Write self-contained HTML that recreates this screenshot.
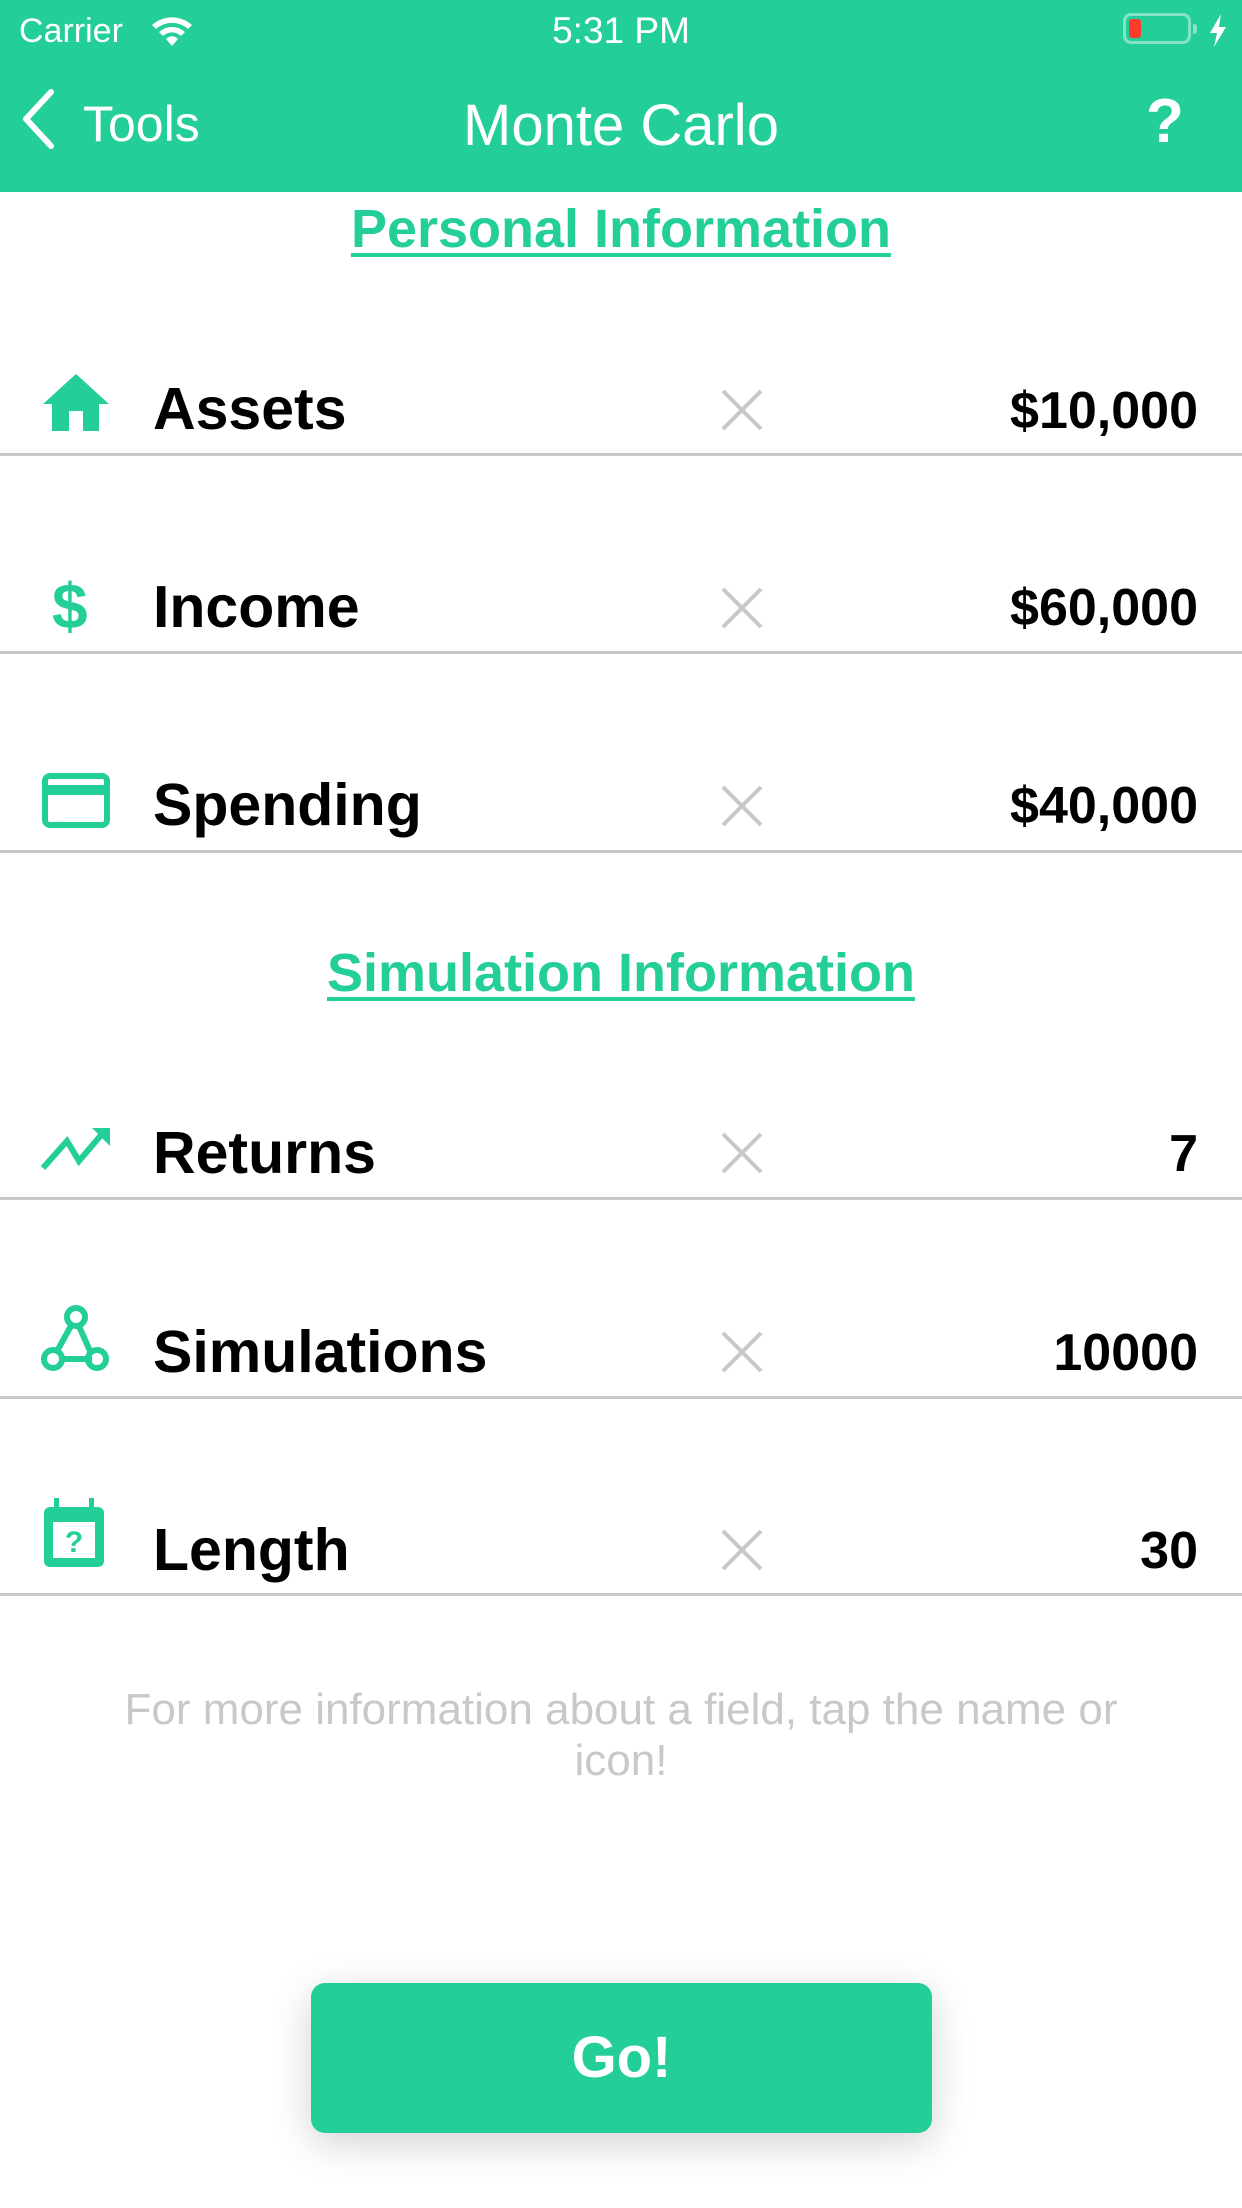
<!DOCTYPE html>
<html><head><meta charset="utf-8"><style>
*{margin:0;padding:0;box-sizing:border-box}
body{width:1242px;height:2208px;background:#fff;position:relative;overflow:hidden;font-family:"Liberation Sans",sans-serif}
.abs{position:absolute}
.hdr{left:0;top:0;width:1242px;height:192px;background:#23ce98}
.w{color:#fff}
.sec{left:0;width:1242px;text-align:center;color:#23ce98;font-weight:bold;font-size:54px;text-decoration:underline;text-decoration-thickness:4px;text-underline-offset:6px}
.lbl{left:153px;font-weight:bold;font-size:59px;color:#000;line-height:70px}
.val{right:44px;font-weight:bold;font-size:52px;color:#000;line-height:60px;text-align:right}
.sep{left:0;width:1242px;height:3px;background:#c8c7cc}
.x{left:721px;width:42px;height:42px}
.ic{left:42px}
</style></head><body>
<div class="abs hdr"></div>
<div class="abs w" style="left:19px;top:12px;font-size:34px">Carrier</div>
<svg class="abs" style="left:150px;top:14px" width="44" height="34" viewBox="0 0 44 34"><path d="M2 11 A30 30 0 0 1 42 11 L38 15 A24 24 0 0 0 6 15Z M9 18 A19 19 0 0 1 35 18 L31 22 A13 13 0 0 0 13 22Z M16 25 A8 8 0 0 1 28 25 L22 32Z" fill="#fff"/></svg>
<div class="abs w" style="left:0;width:1242px;text-align:center;top:10px;font-size:37px">5:31 PM</div>
<div class="abs" style="left:1123px;top:13px;width:68px;height:31px;border:3px solid rgba(255,255,255,.45);border-radius:8px"></div>
<div class="abs" style="left:1129px;top:19px;width:12px;height:19px;background:#ff3b30;border-radius:3px"></div>
<div class="abs" style="left:1193px;top:24px;width:4px;height:10px;background:rgba(255,255,255,.45);border-radius:0 3px 3px 0"></div>
<svg class="abs" style="left:1208px;top:14px" width="20" height="33" viewBox="0 0 20 33"><path d="M13 0 L2 19 L9 19 L6 33 L18 13 L11 13Z" fill="#fff"/></svg>
<svg class="abs" style="left:18px;top:88px" width="40" height="62" viewBox="0 0 40 62"><path d="M33 4 L8 31 L33 58" stroke="#fff" stroke-width="6" fill="none" stroke-linecap="round" stroke-linejoin="round"/></svg>
<div class="abs w" style="left:83px;top:95px;font-size:50px">Tools</div>
<div class="abs w" style="left:0;width:1242px;text-align:center;top:92px;font-size:58px">Monte Carlo</div>
<div class="abs w" style="left:1146px;top:86px;font-size:62px;font-weight:bold">?</div>

<div class="abs sec" style="top:198px">Personal Information</div>
<div class="abs sec" style="top:942px">Simulation Information</div>

<svg class="abs ic" style="top:373px" width="68" height="60" viewBox="0 0 68 60"><path d="M34 1 L67 31 L57 31 L57 58 L41 58 L41 38 L27 38 L27 58 L10 58 L10 31 L1 31Z" fill="#23ce98"/></svg>
<div class="abs lbl" style="top:374px">Assets</div>
<div class="abs val" style="top:381px">$10,000</div>
<div class="abs sep" style="top:453px"></div>

<div class="abs" style="left:52px;top:570px;font-size:64px;font-weight:bold;color:#23ce98;line-height:72px">$</div>
<div class="abs lbl" style="top:572px">Income</div>
<div class="abs val" style="top:578px">$60,000</div>
<div class="abs sep" style="top:651px"></div>

<svg class="abs ic" style="top:773px" width="68" height="55" viewBox="0 0 68 55"><rect x="3" y="3" width="62" height="49" rx="5" fill="none" stroke="#23ce98" stroke-width="6"/><rect x="3" y="12" width="62" height="10" fill="#23ce98"/></svg>
<div class="abs lbl" style="top:770px">Spending</div>
<div class="abs val" style="top:776px">$40,000</div>
<div class="abs sep" style="top:850px"></div>

<svg class="abs" style="left:40px;top:1124px" width="72" height="48" viewBox="0 0 72 48"><path d="M3 44 L27 17 L39 37 L62 10" stroke="#23ce98" stroke-width="6" fill="none"/><path d="M52 4 L70 4 L70 22Z" fill="#23ce98"/></svg>
<div class="abs lbl" style="top:1118px">Returns</div>
<div class="abs val" style="top:1124px">7</div>
<div class="abs sep" style="top:1197px"></div>

<svg class="abs" style="left:40px;top:1304px" width="70" height="70" viewBox="0 0 70 70"><g stroke="#23ce98" stroke-width="6" fill="none"><circle cx="36" cy="13" r="9"/><circle cx="13" cy="55" r="9"/><circle cx="57" cy="55" r="9"/><path d="M32 20 L16 49 M20 55 L52 55 M38 20 L50 47"/></g></svg>
<div class="abs lbl" style="top:1317px">Simulations</div>
<div class="abs val" style="top:1323px">10000</div>
<div class="abs sep" style="top:1396px"></div>

<svg class="abs ic" style="top:1497px" width="66" height="72" viewBox="0 0 66 72"><rect x="2" y="10" width="60" height="60" rx="6" fill="#23ce98"/><rect x="11" y="25" width="42" height="36" fill="#fff"/><rect x="12" y="1" width="5" height="12" fill="#23ce98"/><rect x="47" y="1" width="5" height="12" fill="#23ce98"/><text x="32" y="55" font-family="Liberation Sans" font-weight="bold" font-size="30" fill="#23ce98" text-anchor="middle">?</text></svg>
<div class="abs lbl" style="top:1515px">Length</div>
<div class="abs val" style="top:1521px">30</div>
<div class="abs sep" style="top:1593px"></div>

<svg class="abs x" style="top:389px" viewBox="0 0 42 42"><path d="M2 2L40 40M40 2L2 40" stroke="#c8c7cc" stroke-width="4"/></svg>
<svg class="abs x" style="top:587px" viewBox="0 0 42 42"><path d="M2 2L40 40M40 2L2 40" stroke="#c8c7cc" stroke-width="4"/></svg>
<svg class="abs x" style="top:785px" viewBox="0 0 42 42"><path d="M2 2L40 40M40 2L2 40" stroke="#c8c7cc" stroke-width="4"/></svg>
<svg class="abs x" style="top:1132px" viewBox="0 0 42 42"><path d="M2 2L40 40M40 2L2 40" stroke="#c8c7cc" stroke-width="4"/></svg>
<svg class="abs x" style="top:1331px" viewBox="0 0 42 42"><path d="M2 2L40 40M40 2L2 40" stroke="#c8c7cc" stroke-width="4"/></svg>
<svg class="abs x" style="top:1529px" viewBox="0 0 42 42"><path d="M2 2L40 40M40 2L2 40" stroke="#c8c7cc" stroke-width="4"/></svg>

<div class="abs" style="left:101px;width:1040px;top:1684px;text-align:center;color:#c8c7cc;font-size:44px;line-height:51px">For more information about a field, tap the name or icon!</div>

<div class="abs" style="left:311px;top:1983px;width:621px;height:150px;background:#23ce98;border-radius:14px;box-shadow:0 10px 40px rgba(0,0,0,.18);color:#fff;font-weight:bold;font-size:58px;text-align:center;line-height:150px">Go!</div>
</body></html>
